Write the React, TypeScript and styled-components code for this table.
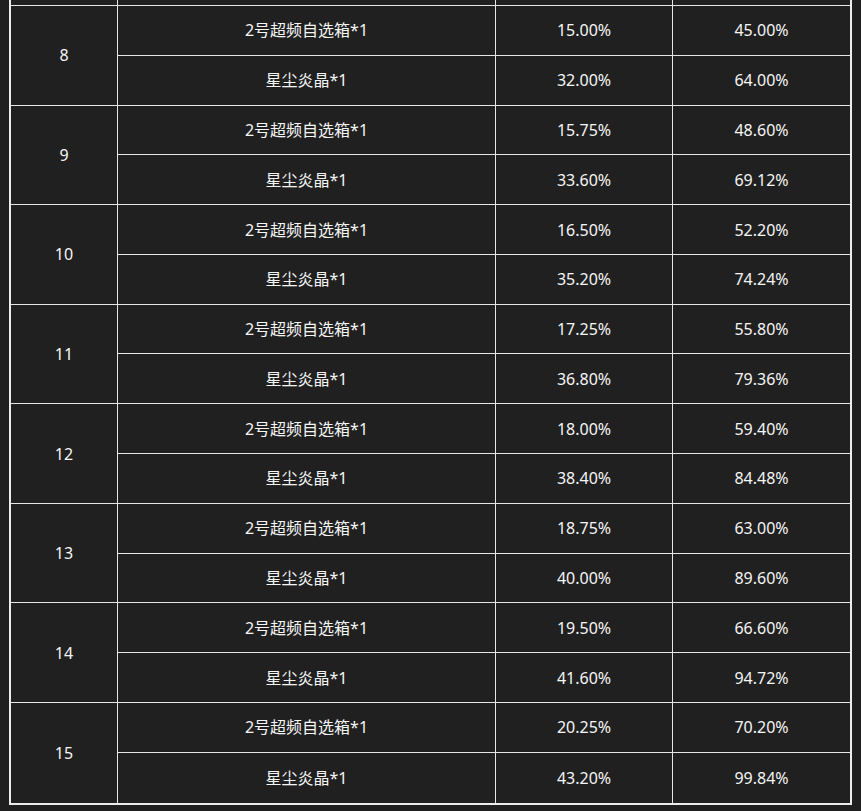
import React from "react";
import styled, { createGlobalStyle } from "styled-components";

const Global = createGlobalStyle`
  html, body {
    margin: 0;
    padding: 0;
    background: #1f1f1f;
    overflow: hidden;
  }
  body {
    font-family: "Noto Sans", "Noto Sans CJK SC", sans-serif;
  }
`;

const Page = styled.div`
  width: 861px;
  height: 811px;
  overflow: hidden;
  padding-left: 9px;
  box-sizing: border-box;
  background: #1f1f1f;
`;

const Table = styled.table`
  margin-top: -8px;
  border-collapse: separate;
  border-spacing: 0;
  table-layout: fixed;
  width: 843px;
  border: 2px solid #ececec;
  background: #202020;
  color: #f5f5f5;
  font-size: 16px;
`;

const Cell = styled.td<{ $last?: boolean; $bottom?: boolean }>`
  box-sizing: border-box;
  height: 49.79px;
  padding: 0;
  text-align: center;
  vertical-align: middle;
  line-height: 20px;
  border-right: ${(p) => (p.$last ? "none" : "1px solid #e6e6e6")};
  border-bottom: ${(p) => (p.$bottom ? "none" : "1px solid #e6e6e6")};
`;

const StubCell = styled(Cell)`
  height: 12px;
`;

type Level = { lv: number; a: [string, string]; b: [string, string] };

const data: Level[] = [
  { lv: 8, a: ["15.00%", "45.00%"], b: ["32.00%", "64.00%"] },
  { lv: 9, a: ["15.75%", "48.60%"], b: ["33.60%", "69.12%"] },
  { lv: 10, a: ["16.50%", "52.20%"], b: ["35.20%", "74.24%"] },
  { lv: 11, a: ["17.25%", "55.80%"], b: ["36.80%", "79.36%"] },
  { lv: 12, a: ["18.00%", "59.40%"], b: ["38.40%", "84.48%"] },
  { lv: 13, a: ["18.75%", "63.00%"], b: ["40.00%", "89.60%"] },
  { lv: 14, a: ["19.50%", "66.60%"], b: ["41.60%", "94.72%"] },
  { lv: 15, a: ["20.25%", "70.20%"], b: ["43.20%", "99.84%"] },
];

export default function App() {
  return (
    <Page>
      <Global />
      <Table>
        <colgroup>
          <col style={{ width: 107 }} />
          <col style={{ width: 378 }} />
          <col style={{ width: 177 }} />
          <col style={{ width: 177 }} />
        </colgroup>
        <tbody>
          <tr>
            <StubCell />
            <StubCell />
            <StubCell />
            <StubCell $last />
          </tr>
          {data.map((row, i) => {
            const lastRow = i === data.length - 1;
            return (
              <React.Fragment key={row.lv}>
                <tr>
                  <Cell rowSpan={2} $bottom={lastRow}>
                    {row.lv}
                  </Cell>
                  <Cell>2号超频自选箱*1</Cell>
                  <Cell>{row.a[0]}</Cell>
                  <Cell $last>{row.a[1]}</Cell>
                </tr>
                <tr>
                  <Cell $bottom={lastRow}>星尘炎晶*1</Cell>
                  <Cell $bottom={lastRow}>{row.b[0]}</Cell>
                  <Cell $last $bottom={lastRow}>
                    {row.b[1]}
                  </Cell>
                </tr>
              </React.Fragment>
            );
          })}
        </tbody>
      </Table>
    </Page>
  );
}
